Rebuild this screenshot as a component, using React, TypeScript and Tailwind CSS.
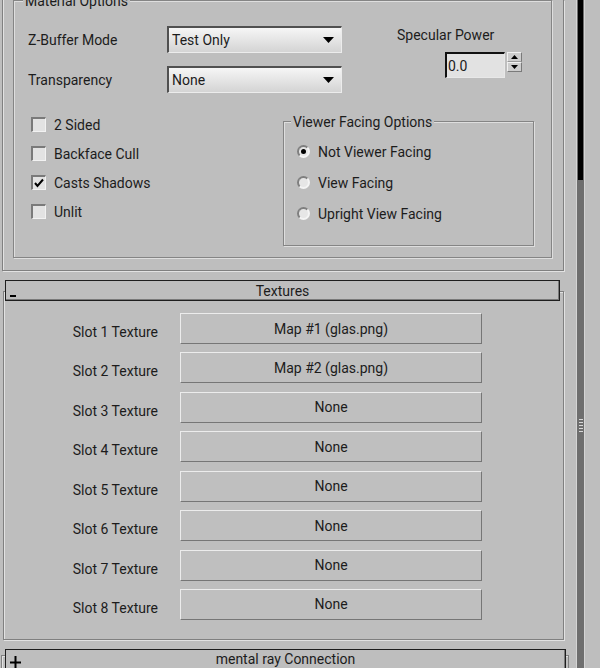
import type { ReactNode } from "react";

const slotMaps = [
  "Map #1 (glas.png)",
  "Map #2 (glas.png)",
  "None",
  "None",
  "None",
  "None",
  "None",
  "None",
];

const checks = [
  { label: "2 Sided", checked: false },
  { label: "Backface Cull", checked: false },
  { label: "Casts Shadows", checked: true },
  { label: "Unlit", checked: false },
];

const facing = [
  { label: "Not Viewer Facing", selected: true },
  { label: "View Facing", selected: false },
  { label: "Upright View Facing", selected: false },
];

function Legend({ children, className }: { children: ReactNode; className: string }) {
  return (
    <span className={"absolute top-[-8px] bg-[#bebebe] px-[2px] leading-[16px] " + className}>
      {children}
    </span>
  );
}

function Dropdown({ value }: { value: string }) {
  return (
    <div className="flex h-[27px] w-[175px] items-center justify-between border-t-2 border-l-2 border-r border-b border-t-[#505050] border-l-[#505050] border-r-[#ececec] border-b-[#ececec] bg-linear-to-b from-[#f6f6f6] to-[#d4d4d4] pl-[3px] pr-[7px]">
      <span className="leading-[16px]">{value}</span>
      <svg width="11" height="6" viewBox="0 0 11 6">
        <path d="M0 0h11L5.5 6z" fill="#000" />
      </svg>
    </div>
  );
}

function Spinner({ value }: { value: string }) {
  return (
    <div className="flex items-start">
      <div className="flex h-[26px] w-[60px] items-center border-t-2 border-l-2 border-r border-b border-t-[#111] border-l-[#111] border-r-[#e8e8e8] border-b-[#e8e8e8] bg-[#e2e2e2] pl-[1px] leading-[16px]">
        {value}
      </div>
      <div className="ml-[2px] flex h-[20px] w-[15px] flex-col">
        <div className="flex flex-1 items-center justify-center border border-t-[#f0f0f0] border-l-[#f0f0f0] border-r-[#7a7a7a] border-b-[#9a9a9a] bg-[#cdcdcd]">
          <svg width="7" height="4" viewBox="0 0 7 4">
            <path d="M3.5 0L7 4H0z" fill="#000" />
          </svg>
        </div>
        <div className="flex flex-1 items-center justify-center border border-t-[#f0f0f0] border-l-[#f0f0f0] border-r-[#7a7a7a] border-b-[#7a7a7a] bg-[#cdcdcd]">
          <svg width="7" height="4" viewBox="0 0 7 4">
            <path d="M0 0h7L3.5 4z" fill="#000" />
          </svg>
        </div>
      </div>
    </div>
  );
}

function Checkbox({ checked }: { checked: boolean }) {
  return (
    <span className="flex h-[15px] w-[15px] shrink-0 items-center justify-center border-t-2 border-l-2 border-r border-b border-t-[#7a7a7a] border-l-[#7a7a7a] border-r-[#f2f2f2] border-b-[#f2f2f2] bg-[#e3e3e3]">
      {checked && (
        <svg width="12" height="12" viewBox="0 0 12 12">
          <path d="M2 6l2.5 3L10 2.5" fill="none" stroke="#000" strokeWidth="2" />
        </svg>
      )}
    </span>
  );
}

function Radio({ selected }: { selected: boolean }) {
  return (
    <span className="flex h-[13px] w-[13px] shrink-0 items-center justify-center rounded-full border-2 border-t-[#7f7f7f] border-l-[#7f7f7f] border-r-[#f4f4f4] border-b-[#f4f4f4] bg-[#e6e6e6]">
      {selected && <span className="h-[5px] w-[5px] rounded-full bg-black" />}
    </span>
  );
}

function RolloutHeader({ title, sign, className }: { title: string; sign: "-" | "+"; className: string }) {
  return (
    <div
      className={
        "relative z-10 flex h-[21px] items-center justify-center border border-[#1e1e1e] bg-[#bebebe] shadow-[inset_-1px_-1px_0_#7a7a7a] " +
        className
      }
    >
      {sign === "-" ? (
        <span className="absolute bottom-[3px] left-[4px] h-[2px] w-[6px] bg-black" />
      ) : (
        <svg className="absolute left-[4px] top-[6px]" width="11" height="13" viewBox="0 0 11 13">
          <path d="M5.5 0v13M0 6.5h11" stroke="#000" strokeWidth="2" />
        </svg>
      )}
      <span className="leading-[16px]">{title}</span>
    </div>
  );
}

export default function App() {
  return (
    <div className="flex h-[668px] w-[600px] overflow-hidden bg-[#bebebe] font-[Roboto,Arial,sans-serif] text-[14px] text-[#1c1c1c]">
      <div className="w-[577px] shrink-0">
        {/* Material Options rollout, scrolled past its header */}
        <div className="ml-[2px] w-[562px] border-x border-b border-[#808080] pb-[12px] shadow-[inset_1px_0_0_#e2e2e2,1px_1px_0_#e2e2e2]">
          <div className="relative ml-[10px] w-[539px] border border-[#858585] pb-[11px] shadow-[inset_1px_1px_0_#dedede,1px_1px_0_#dedede]">
            <Legend className="left-[9px]">Material Options</Legend>

            <div className="flex pl-[14px] pt-[25px]">
              <div className="flex flex-col gap-[13px]">
                <div className="flex items-center">
                  <span className="w-[139px] leading-[16px]">Z-Buffer Mode</span>
                  <Dropdown value="Test Only" />
                </div>
                <div className="flex items-center">
                  <span className="w-[139px] leading-[16px]">Transparency</span>
                  <Dropdown value="None" />
                </div>
              </div>
              <div className="ml-[55px] flex flex-col">
                <span className="mt-[1px] h-[16px] leading-[16px]">Specular Power</span>
                <div className="ml-[48px] mt-[9px]">
                  <Spinner value="0.0" />
                </div>
              </div>
            </div>

            <div className="mt-[24px] flex items-start">
              <div className="ml-[17px] flex w-[252px] flex-col gap-[14px]">
                {checks.map((c) => (
                  <div key={c.label} className="flex h-[15px] items-center gap-[8px]">
                    <Checkbox checked={c.checked} />
                    <span className="leading-[16px]">{c.label}</span>
                  </div>
                ))}
              </div>
              <div className="relative mt-[4px] flex h-[125px] w-[251px] flex-col gap-[18px] border border-[#858585] pl-[13px] pt-[23px] shadow-[inset_1px_1px_0_#dedede,1px_1px_0_#dedede]">
                <Legend className="left-[7px]">Viewer Facing Options</Legend>
                {facing.map((f) => (
                  <div key={f.label} className="flex h-[13px] items-center gap-[8px]">
                    <Radio selected={f.selected} />
                    <span className="leading-[16px]">{f.label}</span>
                  </div>
                ))}
              </div>
            </div>
          </div>
        </div>

        {/* Textures rollout */}
        <div className="mt-[9px]">
          <RolloutHeader title="Textures" sign="-" className="ml-[5px] w-[555px]" />
          <div className="-mt-[10px] ml-[3px] flex w-[561px] flex-col gap-[8.43px] border border-[#808080] pb-[19px] pt-[21px] shadow-[inset_1px_1px_0_#e2e2e2,1px_1px_0_#e2e2e2]">
            {slotMaps.map((map, i) => (
              <div key={i} className="flex items-start">
                <span className="mt-[11px] w-[154px] text-right leading-[16px]">Slot {i + 1} Texture</span>
                <div className="ml-[22px] flex h-[31px] w-[302px] items-center justify-center border border-t-[#ececec] border-l-[#ececec] border-r-[#767676] border-b-[#767676] bg-[#bfbfbf] leading-[16px]">
                  {map}
                </div>
              </div>
            ))}
          </div>
        </div>

        {/* mental ray Connection rollout, collapsed */}
        <div className="mt-[9px]">
          <RolloutHeader title="mental ray Connection" sign="+" className="ml-[5px] w-[561px]" />
          <div className="-mt-[15px] ml-[1px] h-[20px] w-[568px] border border-[#808080] shadow-[inset_1px_1px_0_#e2e2e2]" />
        </div>
      </div>

      {/* panel scrollbar */}
      <div className="flex w-[7px] shrink-0 flex-col bg-[#6e6e6e] shadow-[-1px_0_0_#d4d4d4]">
        <div className="ml-[1px] h-[180px] w-[5px] bg-black" />
        <div className="mt-[239px] flex flex-col items-center gap-[2px]">
          {[0, 1, 2, 3, 4].map((n) => (
            <span key={n} className="h-[1px] w-[4px] bg-[#d8d8d8]" />
          ))}
        </div>
      </div>
      <div className="flex-1 border-l border-[#d4d4d4]" />
    </div>
  );
}
